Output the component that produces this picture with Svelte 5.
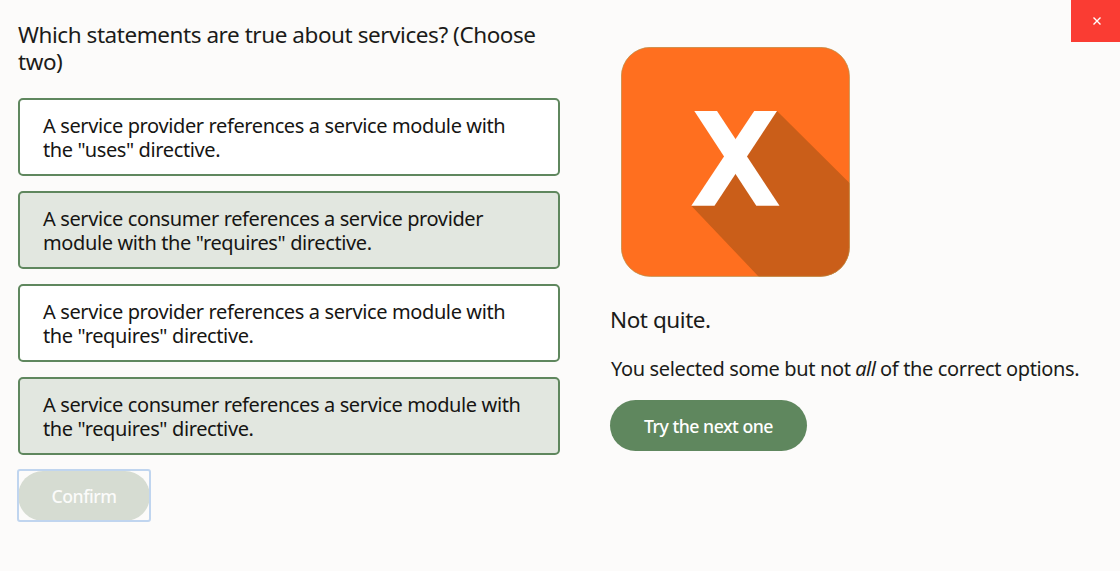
<script>
  const options = [
    { lines: ['A service provider references a service module with', 'the "uses" directive.'], selected: false },
    { lines: ['A service consumer references a service provider', 'module with the "requires" directive.'], selected: true },
    { lines: ['A service provider references a service module with', 'the "requires" directive.'], selected: false },
    { lines: ['A service consumer references a service module with', 'the "requires" directive.'], selected: true }
  ];
</script>

<main>
  <section class="quiz">
    <h1>
      <span class="line">Which statements are true about services? (Choose</span>
      <span class="line">two)</span>
    </h1>
    <div class="options">
      {#each options as option}
        <button class="option" class:selected={option.selected}>
          {#each option.lines as line}
            <span class="line">{line}</span>
          {/each}
        </button>
      {/each}
    </div>
    <button class="pill confirm" disabled><span>Confirm</span></button>
  </section>

  <section class="feedback">
    <svg class="mark" viewBox="0 0 229 230" width="229" height="230" aria-hidden="true">
      <defs>
        <clipPath id="tile"><rect x=".3" y=".3" width="228.2" height="229.2" rx="29" /></clipPath>
      </defs>
      <g clip-path="url(#tile)">
        <rect width="229" height="230" fill="#ff6f1f" />
        <path d="M156 64 229 136.5V230H138L70.5 159 96 122Z" fill="#ca5e19" />
      </g>
      <path d="M73.3 64H96L158.5 158.7H135.3Z" fill="#fff" />
      <path d="M133.2 64H156L93.5 158.7H70.3Z" fill="#fff" />
      <rect x=".4" y=".4" width="228" height="229" rx="29" fill="none" stroke="#b8914a" stroke-width=".7" />
    </svg>
    <h2>Not quite.</h2>
    <p>You selected some but not <em>all</em> of the correct options.</p>
    <button class="pill next"><span>Try the next one</span></button>
  </section>

  <button class="close" aria-label="Close">
    <svg viewBox="0 0 8 8" width="8" height="8"><path d="M.5.5 7.5 7.5M7.5.5.5 7.5" stroke="#fff" stroke-width="1.4" fill="none" /></svg>
  </button>
</main>

<style>
  :global(body) { margin: 0; background: #fcfbfa; }
  main {
    display: grid;
    grid-template-columns: 542px 511px 49px;
    width: 1120px;
    height: 571px;
    box-sizing: border-box;
    padding-left: 18px;
    overflow: hidden;
    color: #1b1b19;
    font-family: "Noto Sans", sans-serif;
  }
  button { font-family: inherit; margin: 0; }
  h1, h2, p { margin: 0; font-weight: 400; white-space: nowrap; }
  .line { display: block; }
  .quiz { padding-top: 21px; }
  h1 { font-size: 22.5px; line-height: 27px; height: 77px; letter-spacing: -0.44px; }
  .options { display: flex; flex-direction: column; gap: 15px; }
  .option {
    display: block;
    box-sizing: border-box;
    width: 542px;
    height: 78px;
    padding: 2px 0 0 23px;
    border: 2px solid #5f875e;
    border-radius: 5px;
    background: #fff;
    color: #161513;
    font-size: 20px;
    line-height: 24px;
    letter-spacing: -0.38px;
    text-align: left;
    white-space: nowrap;
  }
  .selected { background: #e2e7e0; }
  .pill {
    display: flex;
    align-items: center;
    justify-content: center;
    box-sizing: border-box;
    border: 0;
    padding: 0;
    border-radius: 26px;
    color: #fff;
    font-size: 17.7px;
    font-weight: 500;
    letter-spacing: -0.5px;
    white-space: nowrap;
  }
  .confirm {
    width: 132px;
    height: 50px;
    margin-top: 16px;
    background: #d6dcd2;
    color: #fbfbfa;
    position: relative;
  }
  .confirm::after {
    content: "";
    position: absolute;
    inset: -2px -1px -1px -1px;
    border: 2px solid #c0d5ef;
    border-radius: 3px;
  }
  .feedback { padding: 47px 0 0 50px; }
  .mark { display: block; margin-left: 11px; }
  h2 { font-size: 22.5px; line-height: 28px; padding: 29px 0 0; letter-spacing: -0.44px; }
  p { font-size: 20px; line-height: 24px; padding: 23px 0 0 1px; letter-spacing: -0.36px; }
  em { letter-spacing: -0.6px; }
  .next { width: 197px; height: 51px; margin-top: 19px; background: #5f875e; }
  .close {
    width: 49px;
    height: 42px;
    border: 0;
    padding: 0 0 0 3px;
    background: #fa3c33;
    display: flex;
    align-items: center;
    justify-content: center;
  }
</style>
